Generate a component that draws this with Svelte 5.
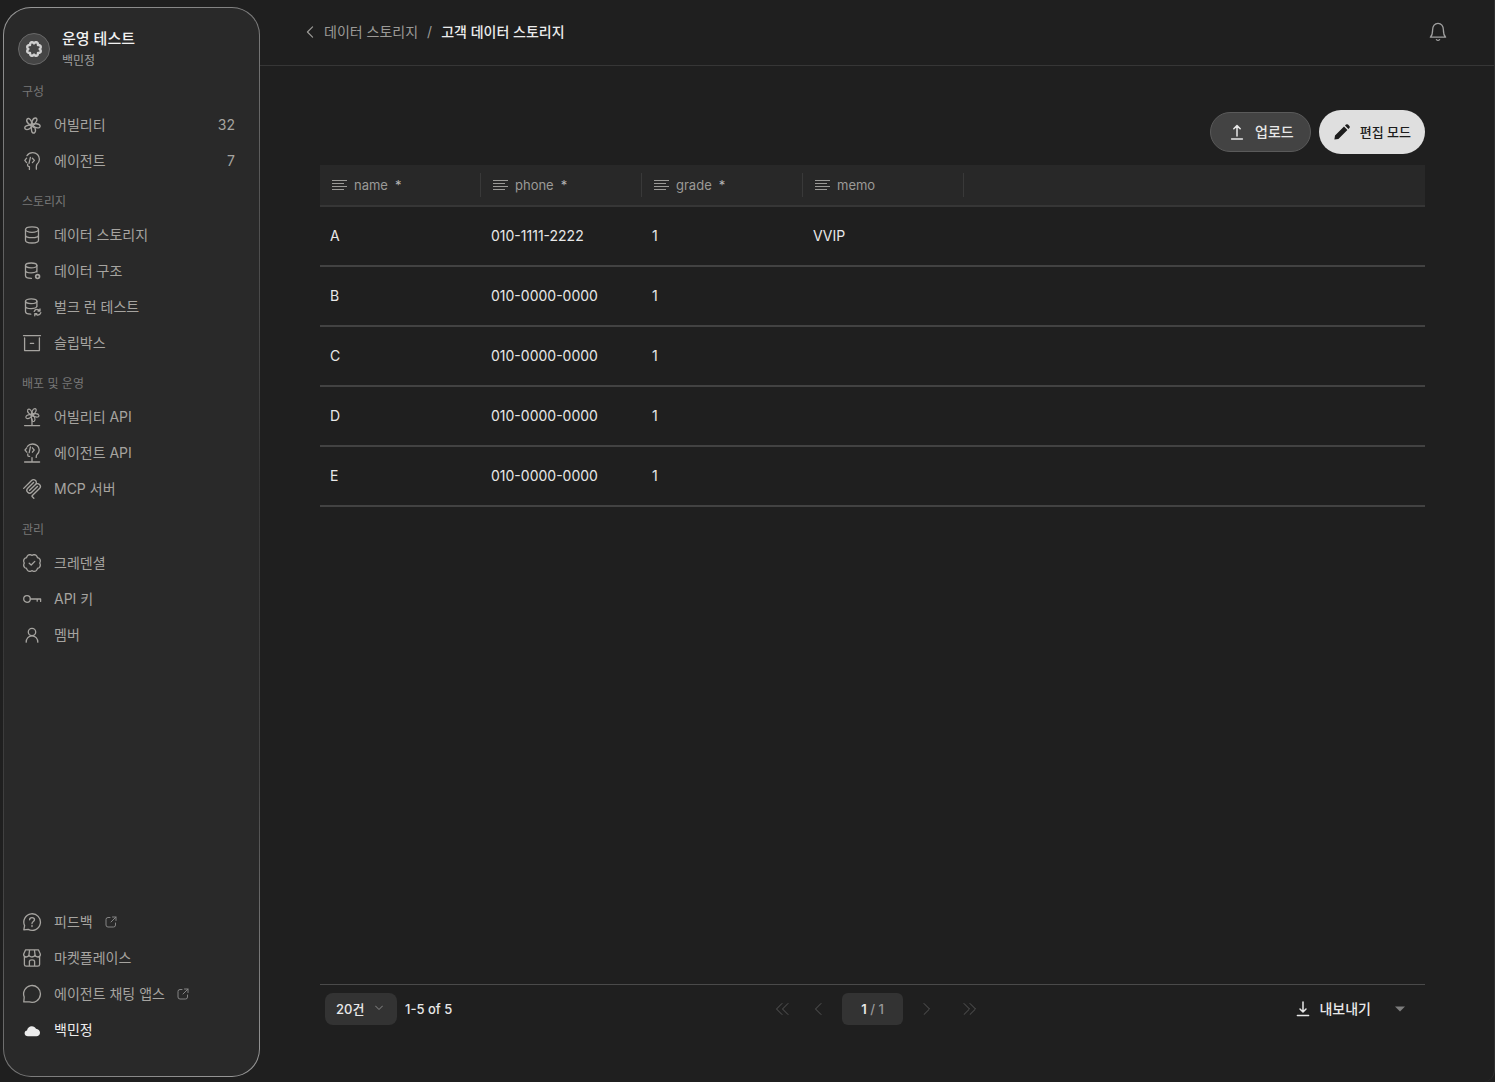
<script>
  // Closed outline with evenly spaced lobes around a centre point.
  function scallop(cx, cy, radius, depth, lobes) {
    const steps = 96;
    let d = '';
    for (let i = 0; i < steps; i++) {
      const t = (i / steps) * Math.PI * 2;
      const r = radius + depth * Math.abs(Math.sin((t * lobes) / 2)) - depth / 2;
      d += `${i ? 'L' : 'M'}${(cx + r * Math.cos(t)).toFixed(2)} ${(cy + r * Math.sin(t)).toFixed(2)}`;
    }
    return d + 'Z';
  }

  const petals = (cx, cy, s) =>
    [-32, 34, 104, 172, 250]
      .map(
        (a) =>
          `<path transform="translate(${cx} ${cy}) rotate(${a}) scale(${s})" d="M.6 2C-2.2-1-3.6-6-1.2-7.4C1.6-8.4 2.2-4 .2 2.2"/>`
      )
      .join('');

  const icons = {
    ability: petals(10.2, 10.2, 1.06),
    agent:
      '<path d="M5 4.6C6.4 2.6 8.4 1.6 10.6 1.6C14.6 1.6 17.4 4.4 17.4 8.2C17.4 10.6 16.4 12 15 13.2C14.2 14 14.2 15.6 14.4 18.2M5.6 13.2V14.6C5.6 15.4 6.4 15.6 7.4 15.6V18.4"/><path d="M4.6 7.2L2.8 9.4L4.6 11.6M8.4 6.4L7 12.4M10.4 7.2L12.4 9.4L10.4 11.6"/>',
    database:
      '<ellipse cx="10" cy="4.6" rx="6.5" ry="2.7"/><path d="M3.5 4.6V15.2C3.5 16.8 6.4 18 10 18S16.5 16.8 16.5 15.2V4.6M3.5 10C3.5 11.6 6.4 12.7 10 12.7S16.5 11.6 16.5 10"/>',
    structure:
      '<ellipse cx="9.2" cy="4.4" rx="5.7" ry="2.4"/><path d="M3.5 4.4V14.8C3.5 16.4 6 17.4 9.4 17.4M14.9 4.4V11M3.5 9.4C3.5 10.8 6 11.8 9.2 11.8C11.8 11.8 14.9 10.8 14.9 9.2"/><circle cx="15.6" cy="15.6" r="1.9" stroke-width="1.7"/>',
    bulk:
      '<ellipse cx="9.2" cy="4.2" rx="5.7" ry="2.4"/><path d="M3.5 4.2V14.6C3.5 16.2 6 17.2 8.8 17.2M14.9 4.2V9.6M3.5 9.2C3.5 10.6 6 11.6 9.2 11.6C11.8 11.6 14.9 10.6 14.9 9"/><path d="M12.2 14.4C12.8 12.8 14.4 12.2 16 12.6L17.8 13.8M18 12V14H16M18.8 15.6C18.2 17.6 16.6 18.4 14.8 17.8L13.2 16.8M12.8 18.8V16.6H14.8"/>',
    slip:
      '<path d="M1.5 2.6H18.5M2.6 5V17.6H17.4V5M8.4 10.4H11.6"/>',
    abilityApi: petals(10.2, 7.8, 0.9) + '<path d="M10 12V18.6M2.6 18.6H17.6"/>',
    agentApi:
      '<path d="M5.4 3.4C6.6 1.8 8.6 1 10.6 1C14.4 1 17.2 3.6 17.2 7C17.2 9.2 16.2 10.4 15 11.4C14.2 12 14.2 13 14.2 14.4M5.8 11V12.4C5.8 13.2 6.6 13.4 7.6 13.4"/><path d="M4.8 4.8L3 7L4.8 9.2M8.4 4L7.2 9.6M10.4 4.8L12.2 7L10.4 9.2M10 14.6V19M2.6 19H17.6"/>',
    mcp:
      '<path transform="scale(.8333)" fill="currentColor" stroke="none" d="M13.85 0a4.16 4.16 0 0 0-2.95 1.217L1.456 10.66a.835.835 0 0 0 0 1.18.835.835 0 0 0 1.18 0l9.442-9.442a2.49 2.49 0 0 1 3.541 0 2.49 2.49 0 0 1 0 3.541L8.59 12.97l-.1.1a.835.835 0 0 0 0 1.18.835.835 0 0 0 1.18 0l.1-.098 7.03-7.034a2.49 2.49 0 0 1 3.542 0l.049.05a2.49 2.49 0 0 1 0 3.54l-8.54 8.54a1.96 1.96 0 0 0 0 2.755l1.753 1.753a.835.835 0 0 0 1.18 0 .835.835 0 0 0 0-1.18l-1.753-1.753a.266.266 0 0 1 0-.394l8.54-8.54a4.185 4.185 0 0 0 0-5.9l-.05-.05a4.16 4.16 0 0 0-2.95-1.218c-.2 0-.401.02-.6.048a4.17 4.17 0 0 0-1.17-3.552A4.16 4.16 0 0 0 13.85 0m0 3.333a.84.84 0 0 0-.59.245L6.275 10.56a4.186 4.186 0 0 0 0 5.902 4.186 4.186 0 0 0 5.902 0L19.16 9.48a.835.835 0 0 0 0-1.18.835.835 0 0 0-1.18 0l-6.985 6.984a2.49 2.49 0 0 1-3.54 0 2.49 2.49 0 0 1 0-3.54l6.983-6.985a.835.835 0 0 0 0-1.18.84.84 0 0 0-.59-.245"/>',
    credential:
      `<path d="${scallop(10, 10, 8.2, 1.1, 8)}"/><path d="M7.2 10.2L9.2 12L12.8 8.4"/>`,
    key: '<circle cx="5" cy="10" r="3.3"/><path d="M8.3 10H18.6V12.4M15.2 10V12.2"/>',
    member:
      '<circle cx="10" cy="7" r="3.7"/><path d="M4.2 17.2C4.2 13.4 6.6 10.8 10 10.8S15.8 13.4 15.8 17.2"/>',
    feedback:
      '<path d="M1.8 17.8L2.6 13.6A8.3 8.3 0 1 1 6.2 17.4ZM7.6 7.8C7.6 6.4 8.6 5.6 10 5.6S12.5 6.4 12.5 7.8C12.5 9.6 10 9.6 10 11.6M10 13.4V14.6"/>',
    market:
      '<path d="M3.6 1.8H16.4L18.4 6.2C18.4 8 17.4 9 15.8 9S13 8 13 6.6C13 8 11.6 9 10 9S7 8 7 6.6C7 8 5.8 9 4.2 9S1.6 8 1.6 6.2ZM7.6 1.8L7 6.6M12.4 1.8L13 6.6M2.4 8.8V16.4Q2.4 18.2 4.2 18.2H15.8Q17.6 18.2 17.6 16.4V8.8M7.4 18V13.6Q7.4 11.8 10 11.8T12.6 13.6V18"/>',
    chat: '<path d="M1.8 17.9L2.2 13A8.4 8.4 0 1 1 7.4 17.9Z"/>',
    cloud:
      '<path fill="currentColor" stroke="none" d="M6 16.2C4 16.2 2.6 15 2.6 13.2C2.6 11.6 3.6 10.6 5 10.4C5.4 8 7.4 6.2 9.8 6.2C11.8 6.2 13.2 7.2 14 8.8C16.2 9 18 10.6 18 12.8C18 14.8 16.4 16.2 14.4 16.2Z"/>'
  };

  const groups = [
    {
      title: '구성',
      items: [
        { icon: 'ability', label: '어빌리티', count: 32 },
        { icon: 'agent', label: '에이전트', count: 7 }
      ]
    },
    {
      title: '스토리지',
      items: [
        { icon: 'database', label: '데이터 스토리지' },
        { icon: 'structure', label: '데이터 구조' },
        { icon: 'bulk', label: '벌크 런 테스트' },
        { icon: 'slip', label: '슬립박스' }
      ]
    },
    {
      title: '배포 및 운영',
      items: [
        { icon: 'abilityApi', label: '어빌리티 API' },
        { icon: 'agentApi', label: '에이전트 API' },
        { icon: 'mcp', label: 'MCP 서버' }
      ]
    },
    {
      title: '관리',
      items: [
        { icon: 'credential', label: '크레덴셜' },
        { icon: 'key', label: 'API 키' },
        { icon: 'member', label: '멤버' }
      ]
    }
  ];

  const footerLinks = [
    { icon: 'feedback', label: '피드백', external: true },
    { icon: 'market', label: '마켓플레이스' },
    { icon: 'chat', label: '에이전트 채팅 앱스', external: true },
    { icon: 'cloud', label: '백민정', active: true }
  ];

  const columns = [
    { key: 'name', required: true },
    { key: 'phone', required: true },
    { key: 'grade', required: true },
    { key: 'memo', required: false }
  ];

  const rows = [
    { name: 'A', phone: '010-1111-2222', grade: '1', memo: 'VVIP' },
    { name: 'B', phone: '010-0000-0000', grade: '1', memo: '' },
    { name: 'C', phone: '010-0000-0000', grade: '1', memo: '' },
    { name: 'D', phone: '010-0000-0000', grade: '1', memo: '' },
    { name: 'E', phone: '010-0000-0000', grade: '1', memo: '' }
  ];
</script>

{#snippet navLink(item)}
  <li>
    <a class="nav-link" class:active={item.active} href="#{item.icon}">
      <svg class="icon" viewBox="0 0 20 20" aria-hidden="true">{@html icons[item.icon]}</svg>
      <span>{item.label}</span>
      {#if item.external}
        <svg class="external" viewBox="0 0 12 12" aria-hidden="true">
          <path d="M5 1.5H3Q1 1.5 1 3.5V9Q1 11 3 11H8.5Q10.5 11 10.5 9V7M7.5 1H11V4.5M11 1L6 6" />
        </svg>
      {/if}
      {#if item.count}
        <span class="count">{item.count}</span>
      {/if}
    </a>
  </li>
{/snippet}

<div class="app">
  <aside class="sidebar">
    <div class="workspace">
      <span class="avatar">
        <svg viewBox="0 0 20 20" aria-hidden="true">
          <path d={scallop(10, 10, 6.4, 1.6, 8)} />
        </svg>
      </span>
      <div>
        <div class="workspace-name">운영 테스트</div>
        <div class="workspace-user">백민정</div>
      </div>
    </div>

    <nav aria-label="주 메뉴">
      {#each groups as group}
        <h2>{group.title}</h2>
        <ul>
          {#each group.items as item}
            {@render navLink(item)}
          {/each}
        </ul>
      {/each}
    </nav>

    <ul class="bottom">
      {#each footerLinks as item}
        {@render navLink(item)}
      {/each}
    </ul>
  </aside>

  <main>
    <header>
      <nav class="crumbs" aria-label="경로">
        <a href="#database">
          <svg class="back" viewBox="0 0 8 14" aria-hidden="true"><path d="M7 1L1 7L7 13" /></svg>
          데이터 스토리지
        </a>
        <span class="slash">/</span>
        <strong>고객 데이터 스토리지</strong>
      </nav>
      <button class="bell" aria-label="알림">
        <svg viewBox="0 0 20 20" aria-hidden="true">
          <path d="M2.4 15.2H17.6C15.8 13.4 15.4 12 15.4 8C15.4 4 13.2 1.4 10 1.4S4.6 4 4.6 8C4.6 12 4.2 13.4 2.4 15.2ZM8.4 17.6Q10 19.2 11.6 17.6" />
        </svg>
      </button>
    </header>

    <section class="content">
      <div class="actions">
        <button class="upload">
          <svg viewBox="0 0 16 16" aria-hidden="true"><path d="M8 12V1.6M4.8 4.8L8 1.6L11.2 4.8M2.6 15H13.4" /></svg>
          업로드
        </button>
        <button class="edit">
          <svg viewBox="0 0 16 16" aria-hidden="true">
            <path d="M.4 15.6L1 11.6L10 2.6L13.4 6L4.4 15ZM11 1.6L12 .6Q13 -.2 14 .6L15.4 2Q16.2 3 15.4 4L14.4 5Z" />
          </svg>
          편집 모드
        </button>
      </div>

      <table>
        <thead>
          <tr>
            {#each columns as column}
              <th class="field" scope="col">
                <div class="field-head">
                  <svg viewBox="0 0 15 12" aria-hidden="true"><path d="M0 1.5H15M0 4.5H12M0 7.5H15M0 10.5H12" /></svg>
                  <span>{column.key}</span>
                  {#if column.required}<span class="required">*</span>{/if}
                </div>
              </th>
            {/each}
            <td></td>
          </tr>
        </thead>
        <tbody>
          {#each rows as row}
            <tr>
              {#each columns as column}
                <td>{row[column.key]}</td>
              {/each}
              <td></td>
            </tr>
          {/each}
        </tbody>
      </table>

      <footer>
        <div class="size">
          <label class="size-select">
            <select aria-label="페이지당 건수">
              <option>20건</option>
              <option>50건</option>
            </select>
            <svg viewBox="0 0 8 6" aria-hidden="true"><path d="M.5 1L4 4.5L7.5 1" /></svg>
          </label>
          <span>1-5 of 5</span>
        </div>

        <div class="pager">
          <button aria-label="첫 페이지">
            <svg viewBox="0 0 14 12" aria-hidden="true"><path d="M7 .5L1.5 6L7 11.5M13 .5L7.5 6L13 11.5" /></svg>
          </button>
          <button class="prev" aria-label="이전 페이지">
            <svg viewBox="0 0 14 12" aria-hidden="true"><path d="M10 .5L4.5 6L10 11.5" /></svg>
          </button>
          <div class="page"><b>1</b> / 1</div>
          <button class="next" aria-label="다음 페이지">
            <svg viewBox="0 0 14 12" aria-hidden="true"><path d="M4 .5L9.5 6L4 11.5" /></svg>
          </button>
          <button class="last" aria-label="마지막 페이지">
            <svg viewBox="0 0 14 12" aria-hidden="true"><path d="M1 .5L6.5 6L1 11.5M7 .5L12.5 6L7 11.5" /></svg>
          </button>
        </div>

        <button class="export">
          <svg class="download" viewBox="0 0 14 16" aria-hidden="true"><path d="M7 1V11M4 8L7 11L10 8M1.4 14.5H12.6" /></svg>
          내보내기
          <svg class="caret" viewBox="0 0 10 6" aria-hidden="true"><path d="M0 .5H10L5 5.5Z" /></svg>
        </button>
      </footer>
    </section>
  </main>
</div>

<style>
  :global(body) {
    background: #1f1f1f;
  }

  .app {
    display: flex;
    box-sizing: border-box;
    min-height: 100vh;
    border-right: 1px solid #303030;
    border-bottom-right-radius: 12px;
    background: #1f1f1f;
    color: #e8e8e8;
    font-family: Inter, 'Noto Sans CJK KR', sans-serif;
    font-size: 14px;
    line-height: 20px;
  }

  svg {
    display: block;
    flex: none;
    fill: none;
    stroke: currentColor;
    stroke-linecap: round;
    stroke-linejoin: round;
  }

  button,
  select {
    border: 0;
    background: none;
    color: inherit;
    font: inherit;
    cursor: pointer;
  }

  a {
    color: inherit;
    text-decoration: none;
  }

  ul {
    margin: 0;
    padding: 0;
    list-style: none;
  }

  .sidebar {
    display: flex;
    flex: none;
    flex-direction: column;
    box-sizing: border-box;
    width: 257px;
    margin: 7px 0 5px 3px;
    padding: 21px 24px 28px 18px;
    border: 1px solid transparent;
    border-radius: 28px;
    background:
      linear-gradient(#292929, #292929) padding-box,
      linear-gradient(155deg, #9a9a9a 0%, #555 25%, #363636 50%, #444 75%, #9a9a9a 100%) border-box;
  }

  .workspace {
    display: flex;
    align-items: center;
    gap: 12px;
    margin-left: -4px;
    height: 40px;
  }

  .avatar {
    display: grid;
    place-items: center;
    box-sizing: border-box;
    width: 32px;
    height: 32px;
    border: 1px solid #686868;
    border-radius: 50%;
    background: #454545;
    color: #cfcfcf;
  }

  .avatar svg {
    width: 20px;
    height: 20px;
    stroke-width: 2.4;
  }

  .workspace-name {
    font-size: 15px;
    font-weight: 500;
    line-height: 22px;
    color: #f2f2f2;
  }

  .workspace-user {
    margin-top: 2px;
    font-size: 12px;
    line-height: 18px;
    color: #a0a0a0;
  }

  .sidebar h2 {
    box-sizing: border-box;
    height: 38px;
    margin: 0;
    padding-top: 13px;
    font-size: 12px;
    font-weight: 400;
    line-height: 20px;
    color: #777;
  }

  .nav-link {
    display: flex;
    align-items: center;
    gap: 12px;
    height: 36px;
    color: #a6a4a0;
  }

  .nav-link.active {
    color: #ececec;
  }

  .icon {
    width: 20px;
    height: 20px;
    stroke-width: 1.3;
  }

  .external {
    width: 12px;
    height: 12px;
    color: #858585;
  }

  .count {
    margin-left: auto;
  }

  .bottom {
    margin-top: auto;
  }

  main {
    display: flex;
    flex: 1;
    flex-direction: column;
    min-width: 0;
  }

  header {
    display: flex;
    align-items: center;
    justify-content: space-between;
    box-sizing: border-box;
    height: 66px;
    padding: 0 46px 2px 46px;
    border-bottom: 1px solid #363636;
  }

  .crumbs {
    display: flex;
    align-items: center;
    gap: 9px;
  }

  .crumbs a {
    display: flex;
    align-items: center;
    gap: 10px;
  }

  .crumbs a,
  .slash {
    color: #9b9a97;
  }

  .crumbs strong {
    font-weight: 500;
    color: #ececec;
  }

  .back {
    width: 8px;
    height: 12px;
    stroke-width: 1.4;
  }

  .bell {
    padding: 0;
    color: #a0a0a0;
  }

  .bell svg {
    width: 20px;
    height: 20px;
    stroke-width: 1.3;
  }

  .content {
    display: flex;
    flex: 1;
    flex-direction: column;
    padding: 44px 69px 57px 60px;
  }

  .actions {
    display: flex;
    align-items: center;
    justify-content: flex-end;
    gap: 8px;
    margin-bottom: 11px;
  }

  .upload,
  .edit {
    display: flex;
    align-items: center;
    gap: 10px;
    border-radius: 24px;
    font-weight: 500;
  }

  .upload {
    height: 40px;
    padding: 0 16px 0 18px;
    border: 1px solid #5a5a5a;
    background: #434343;
  }

  .edit {
    height: 44px;
    padding: 0 14px 0 15px;
    background: #dfdfdf;
    font-size: 13px;
    color: #1c1c1c;
  }

  .upload svg,
  .edit svg {
    width: 16px;
    height: 16px;
    stroke-width: 1.5;
  }

  .edit svg path {
    fill: currentColor;
    stroke: none;
  }

  table {
    width: 100%;
    border-collapse: separate;
    border-spacing: 0;
    table-layout: fixed;
  }

  thead th,
  thead td {
    box-sizing: border-box;
    height: 42px;
    padding: 0;
    border-bottom: 2px solid #363636;
    background: #282828;
  }

  .field {
    width: 161px;
    font-size: 13px;
    font-weight: 400;
    color: #9b9a97;
  }

  .field-head {
    display: flex;
    align-items: center;
    gap: 7px;
    height: 24px;
    padding-left: 12px;
    border-right: 1px solid #393939;
  }

  .field-head svg {
    width: 15px;
    height: 12px;
    stroke-linecap: butt;
  }

  .required {
    color: #b5b5b5;
  }

  tbody td {
    box-sizing: border-box;
    height: 60px;
    padding: 0 10px;
    border-bottom: 2px solid #424242;
  }

  footer {
    display: grid;
    grid-template-columns: 1fr auto 1fr;
    align-items: center;
    margin-top: auto;
    padding-top: 8px;
    border-top: 1px solid #4a4a4a;
    font-size: 13px;
    font-weight: 500;
  }

  .size {
    display: flex;
    align-items: center;
    gap: 8px;
    padding-left: 5px;
  }

  .size-select {
    position: relative;
  }

  .size-select select {
    display: block;
    width: 72px;
    height: 32px;
    padding: 0 0 0 11px;
    border-radius: 8px;
    background: #333;
    appearance: none;
  }

  .size-select svg {
    position: absolute;
    top: 12px;
    right: 14px;
    width: 8px;
    height: 6px;
    color: #8a8a8a;
    pointer-events: none;
  }

  .pager {
    display: flex;
    align-items: center;
    padding-left: 7px;
    color: #565656;
  }

  .pager button {
    padding: 0 11px;
  }

  .pager .prev {
    margin-right: 6px;
  }

  .pager .next {
    margin-left: 6px;
  }

  .pager .last {
    margin-left: 7px;
  }

  .pager svg {
    width: 14px;
    height: 12px;
  }

  .page {
    width: 61px;
    border-radius: 6px;
    background: #333;
    line-height: 32px;
    text-align: center;
    color: #999;
  }

  .page b {
    font-weight: 600;
    color: #e8e8e8;
  }

  .export {
    display: flex;
    align-items: center;
    justify-self: end;
    gap: 9px;
    padding: 0 20px 0 0;
    font-size: 14px;
  }

  .download {
    width: 14px;
    height: 16px;
    stroke-width: 1.5;
  }

  .caret {
    width: 10px;
    height: 6px;
    margin-left: 15px;
    color: #7d7d7d;
  }

  .caret path {
    fill: currentColor;
    stroke: none;
  }
</style>
